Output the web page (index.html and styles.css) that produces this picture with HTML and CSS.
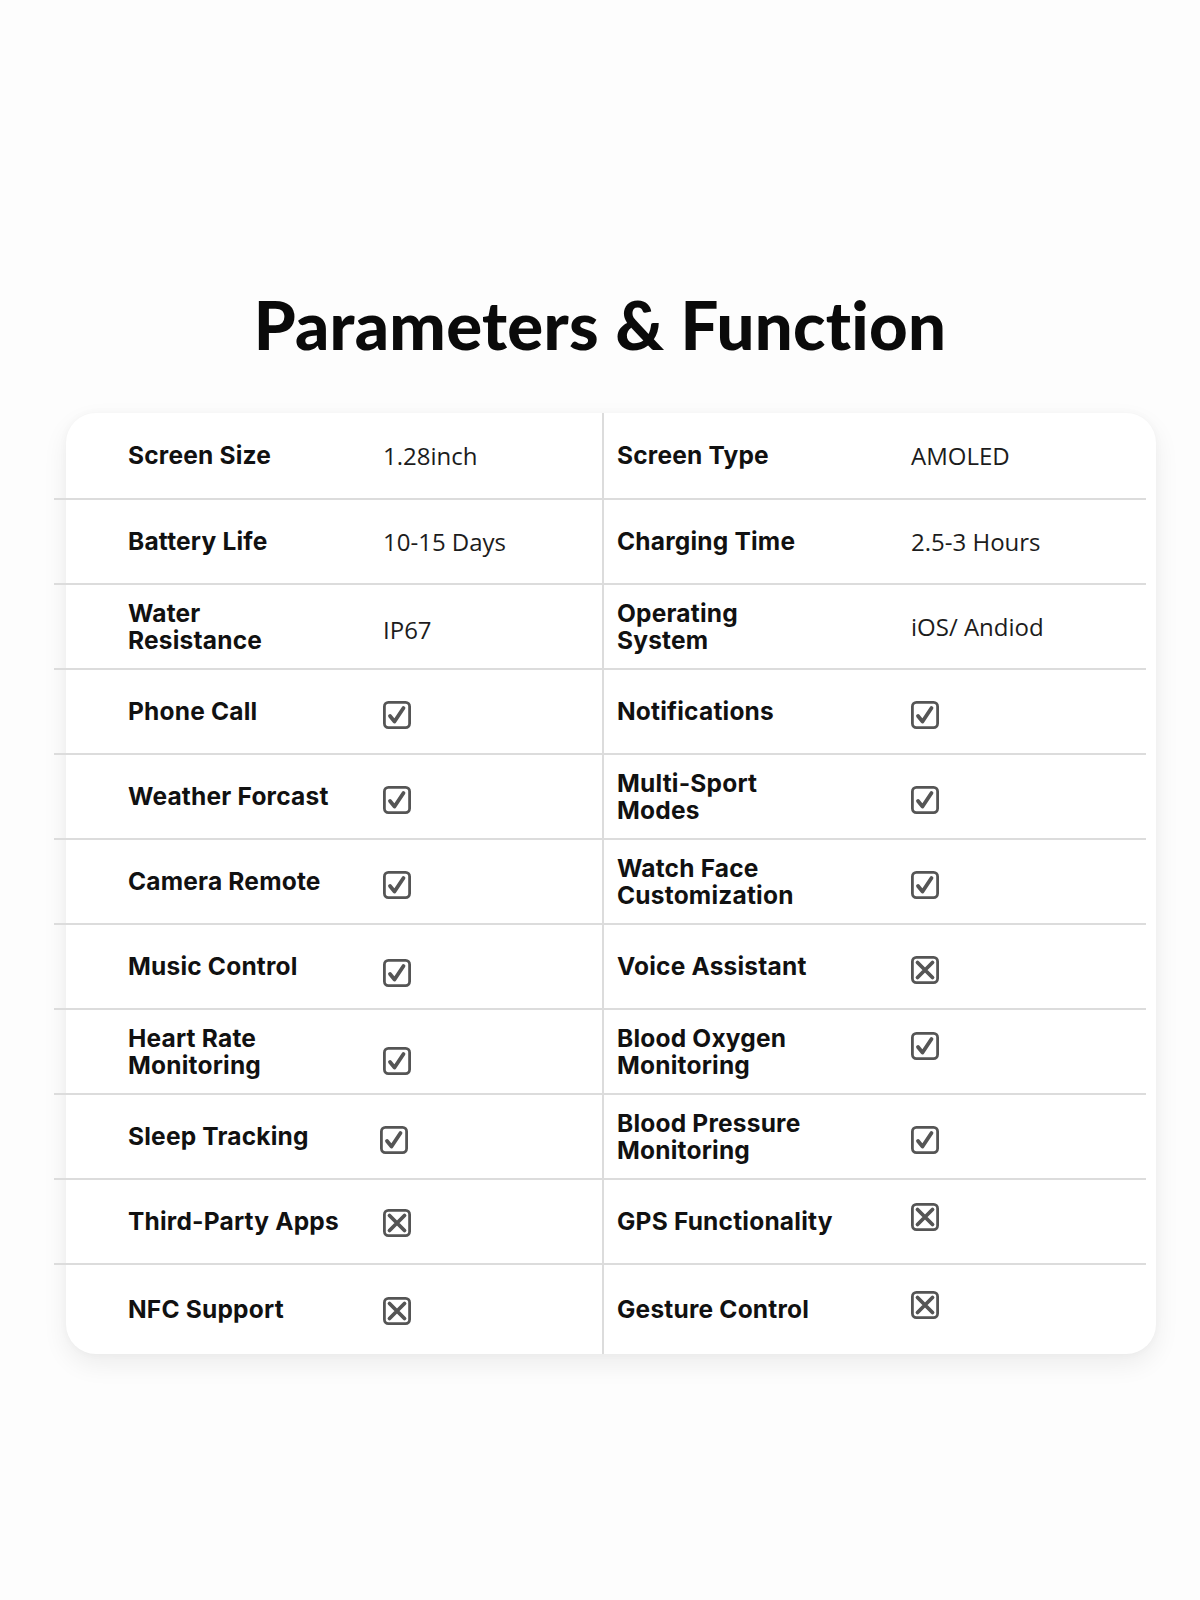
FILE: index.html
```html
<!DOCTYPE html>
<html lang="en">
<head>
<meta charset="utf-8">
<title>Parameters &amp; Function</title>
<link rel="stylesheet" href="styles.css">
</head>
<body>
<main class="page">
  <h1 class="title">Parameters &amp; Function</h1>
  <section class="card">
    <div class="table">
      <div class="row row-first">
        <div class="cell cell-left"><span class="label">Screen Size</span><span class="value">1.28inch</span></div>
        <div class="cell cell-right"><span class="label">Screen Type</span><span class="value">AMOLED</span></div>
      </div>
      <div class="row">
        <div class="cell cell-left"><span class="label">Battery Life</span><span class="value">10-15 Days</span></div>
        <div class="cell cell-right"><span class="label">Charging Time</span><span class="value">2.5-3 Hours</span></div>
      </div>
      <div class="row">
        <div class="cell cell-left"><span class="label">Water<br>Resistance</span><span class="value value-low">IP67</span></div>
        <div class="cell cell-right"><span class="label">Operating<br>System</span><span class="value">iOS/ Andiod</span></div>
      </div>
      <div class="row">
        <div class="cell cell-left"><span class="label">Phone Call</span><span class="value"><svg class="icon" viewBox="0 0 28 28"><rect x="1.4" y="1.4" width="25.2" height="25.2" rx="4"/><polyline points="7,15 11.5,20.5 20.5,7"/></svg></span></div>
        <div class="cell cell-right"><span class="label">Notifications</span><span class="value"><svg class="icon" viewBox="0 0 28 28"><rect x="1.4" y="1.4" width="25.2" height="25.2" rx="4"/><polyline points="7,15 11.5,20.5 20.5,7"/></svg></span></div>
      </div>
      <div class="row">
        <div class="cell cell-left"><span class="label">Weather Forcast</span><span class="value"><svg class="icon" viewBox="0 0 28 28"><rect x="1.4" y="1.4" width="25.2" height="25.2" rx="4"/><polyline points="7,15 11.5,20.5 20.5,7"/></svg></span></div>
        <div class="cell cell-right"><span class="label">Multi-Sport<br>Modes</span><span class="value"><svg class="icon" viewBox="0 0 28 28"><rect x="1.4" y="1.4" width="25.2" height="25.2" rx="4"/><polyline points="7,15 11.5,20.5 20.5,7"/></svg></span></div>
      </div>
      <div class="row">
        <div class="cell cell-left"><span class="label">Camera Remote</span><span class="value"><svg class="icon" viewBox="0 0 28 28"><rect x="1.4" y="1.4" width="25.2" height="25.2" rx="4"/><polyline points="7,15 11.5,20.5 20.5,7"/></svg></span></div>
        <div class="cell cell-right"><span class="label">Watch Face<br>Customization</span><span class="value"><svg class="icon" viewBox="0 0 28 28"><rect x="1.4" y="1.4" width="25.2" height="25.2" rx="4"/><polyline points="7,15 11.5,20.5 20.5,7"/></svg></span></div>
      </div>
      <div class="row">
        <div class="cell cell-left"><span class="label">Music Control</span><span class="value"><svg class="icon icon-low" viewBox="0 0 28 28"><rect x="1.4" y="1.4" width="25.2" height="25.2" rx="4"/><polyline points="7,15 11.5,20.5 20.5,7"/></svg></span></div>
        <div class="cell cell-right"><span class="label">Voice Assistant</span><span class="value"><svg class="icon" viewBox="0 0 28 28"><rect x="1.4" y="1.4" width="25.2" height="25.2" rx="4"/><path d="M6.5 6.5 L21.5 21.5 M21.5 6.5 L6.5 21.5"/></svg></span></div>
      </div>
      <div class="row">
        <div class="cell cell-left"><span class="label">Heart Rate<br>Monitoring</span><span class="value"><svg class="icon icon-lower" viewBox="0 0 28 28"><rect x="1.4" y="1.4" width="25.2" height="25.2" rx="4"/><polyline points="7,15 11.5,20.5 20.5,7"/></svg></span></div>
        <div class="cell cell-right"><span class="label">Blood Oxygen<br>Monitoring</span><span class="value"><svg class="icon icon-higher" viewBox="0 0 28 28"><rect x="1.4" y="1.4" width="25.2" height="25.2" rx="4"/><polyline points="7,15 11.5,20.5 20.5,7"/></svg></span></div>
      </div>
      <div class="row">
        <div class="cell cell-left"><span class="label">Sleep Tracking</span><span class="value value-shift"><svg class="icon" viewBox="0 0 28 28"><rect x="1.4" y="1.4" width="25.2" height="25.2" rx="4"/><polyline points="7,15 11.5,20.5 20.5,7"/></svg></span></div>
        <div class="cell cell-right"><span class="label">Blood Pressure<br>Monitoring</span><span class="value"><svg class="icon" viewBox="0 0 28 28"><rect x="1.4" y="1.4" width="25.2" height="25.2" rx="4"/><polyline points="7,15 11.5,20.5 20.5,7"/></svg></span></div>
      </div>
      <div class="row">
        <div class="cell cell-left"><span class="label">Third-Party Apps</span><span class="value"><svg class="icon icon-mid" viewBox="0 0 28 28"><rect x="1.4" y="1.4" width="25.2" height="25.2" rx="4"/><path d="M6.5 6.5 L21.5 21.5 M21.5 6.5 L6.5 21.5"/></svg></span></div>
        <div class="cell cell-right"><span class="label">GPS Functionality</span><span class="value"><svg class="icon icon-high" viewBox="0 0 28 28"><rect x="1.4" y="1.4" width="25.2" height="25.2" rx="4"/><path d="M6.5 6.5 L21.5 21.5 M21.5 6.5 L6.5 21.5"/></svg></span></div>
      </div>
      <div class="row row-last">
        <div class="cell cell-left"><span class="label">NFC Support</span><span class="value"><svg class="icon icon-mid" viewBox="0 0 28 28"><rect x="1.4" y="1.4" width="25.2" height="25.2" rx="4"/><path d="M6.5 6.5 L21.5 21.5 M21.5 6.5 L6.5 21.5"/></svg></span></div>
        <div class="cell cell-right"><span class="label">Gesture Control</span><span class="value"><svg class="icon icon-high" viewBox="0 0 28 28"><rect x="1.4" y="1.4" width="25.2" height="25.2" rx="4"/><path d="M6.5 6.5 L21.5 21.5 M21.5 6.5 L6.5 21.5"/></svg></span></div>
      </div>
    </div>
  </section>
</main>
</body>
</html>
```
FILE: styles.css
```css
html, body {
  margin: 0;
  padding: 0;
  background: #fdfdfd;
}

.page {
  width: 1200px;
  height: 1600px;
  padding-top: 284px;
  box-sizing: border-box;
}

.title {
  margin: 0;
  text-align: center;
  font-family: Lato, "Liberation Sans", sans-serif;
  font-weight: 900;
  font-size: 67px;
  line-height: 80px;
  color: #0a0a0a;
  letter-spacing: 0.3px;
}

.card {
  margin: 49px 0 0 66px;
  width: 1090px;
  height: 941px;
  background: #ffffff;
  border-radius: 30px;
  box-shadow: 0 10px 26px rgba(0, 0, 0, 0.07), 0 0 8px rgba(0, 0, 0, 0.03);
}

.table {
  margin-left: -12px;
  width: 1092px;
}

.row {
  display: flex;
  height: 85px;
  box-sizing: border-box;
  border-bottom: 2px solid #dcdcdc;
}

.row-first {
  height: 87px;
}

.row-last {
  height: 89px;
  border-bottom: none;
}

.cell {
  display: flex;
  align-items: center;
  box-sizing: border-box;
}

.cell-left {
  width: 550px;
  padding-left: 74px;
  border-right: 2px solid #dcdcdc;
}

.cell-right {
  width: 542px;
  padding-left: 13px;
}

.cell-left .label {
  width: 255px;
}

.cell-right .label {
  width: 294px;
}

.label {
  font-family: Inter, "Liberation Sans", sans-serif;
  font-weight: 700;
  font-size: 24.5px;
  line-height: 27px;
  letter-spacing: 0.2px;
  color: #111111;
  flex: none;
}

.value {
  font-family: "Open Sans", "Liberation Sans", sans-serif;
  font-weight: 400;
  font-size: 24px;
  color: #1c1c1c;
  display: flex;
  align-items: center;
}

.value-low {
  margin-top: 6px;
}

.value-shift {
  margin-left: -3px;
}

.icon {
  width: 28px;
  height: 28px;
  margin-top: 6px;
  fill: none;
  stroke: #555555;
  stroke-width: 2.8;
  stroke-linecap: round;
  stroke-linejoin: round;
}

.icon polyline,
.icon path {
  stroke-width: 3.8;
}

.icon-mid {
  margin-top: 2px;
}

.icon-low {
  margin-top: 12px;
}

.icon-lower {
  margin-top: 18px;
}

.icon-high {
  margin-top: -10px;
}

.icon-higher {
  margin-top: -12px;
}
```
